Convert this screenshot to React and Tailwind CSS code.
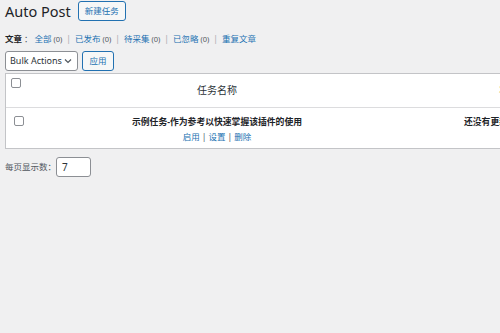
import React from "react";

const font = { fontFamily: '"Noto Sans", "Noto Sans CJK SC", sans-serif' };

function Box({ className = "" }) {
  return (
    <div
      className={`w-[10px] h-[10px] rounded-[2px] border border-[#8c8f94] bg-white ${className}`}
    />
  );
}

function Sep() {
  return <span className="text-[#a7aaad] mx-[4px]">|</span>;
}

function Link({ label }) {
  return (
    <span>
      <span className="text-[#2271b1]">{label}</span>
      <span className="text-[#50575e] text-[7.5px] ml-[2px]">(0)</span>
    </span>
  );
}

export default function App() {
  return (
    <div
      className="w-[500px] h-[333px] bg-[#f0f0f1] overflow-hidden pl-[5px] text-[#1d2327]"
      style={font}
    >
      <div className="mt-[1px] h-[20px] flex items-center gap-[7px]">
        <h1 className="text-[14.5px] leading-[20px] font-normal text-[#1d2327]">
          Auto Post
        </h1>
        <div className="h-[20px] px-[6px] flex items-center border border-[#2271b1] rounded-[3px] bg-[#f6f7f7] text-[#2271b1] text-[8.5px]">
          新建任务
        </div>
      </div>

      <div className="mt-[11px] h-[14px] leading-[14px] text-[8.5px] flex items-center whitespace-nowrap">
        <span className="font-bold text-[#1d2327]">文章</span>
        <span className="text-[#50575e] mx-[2px]">：</span>
        <Link label="全部" />
        <Sep />
        <Link label="已发布" />
        <Sep />
        <Link label="待采集" />
        <Sep />
        <Link label="已忽略" />
        <Sep />
        <span className="text-[#2271b1]">重复文章</span>
      </div>

      <div className="mt-[5px] h-[20px] flex gap-[4px]">
        <div className="w-[73px] h-[20px] border border-[#8c8f94] rounded-[3px] bg-white flex items-center justify-between pl-[4px] pr-[5px] text-[9px] text-[#2c3338] whitespace-nowrap">
          <span>Bulk Actions</span>
          <svg width="8" height="6" viewBox="0 0 8 6" fill="none">
            <path d="M1 1.5 L4 4.5 L7 1.5" stroke="#50575e" strokeWidth="1.2" />
          </svg>
        </div>
        <div className="w-[32px] h-[20px] border border-[#2271b1] rounded-[3px] bg-[#f6f7f7] text-[#2271b1] text-[8.5px] flex items-center justify-center">
          应用
        </div>
      </div>

      <div className="mt-[2px] w-[520px] bg-white border border-[#c3c4c7] whitespace-nowrap overflow-hidden">
        <div className="h-[34px] flex border-b border-[#dcdcde]">
          <div className="w-[25px] shrink-0 pl-[5px] pt-[4px]">
            <Box />
          </div>
          <div className="w-[372px] shrink-0 flex items-center justify-center text-[10px] text-[#2c3338]">
            任务名称
          </div>
          <div className="flex-1 flex items-center pl-[96px] text-[10px] text-[#c9a33b]">
            状态
          </div>
        </div>
        <div className="h-[40px] flex">
          <div className="w-[25px] shrink-0 pl-[8px] pt-[8px]">
            <Box />
          </div>
          <div className="w-[372px] shrink-0 flex flex-col items-center pt-[8px]">
            <div className="text-[8.8px] leading-[12px] font-bold text-[#1d2327]">
              示例任务-作为参考以快速掌握该插件的使用
            </div>
            <div className="mt-[3px] text-[8.5px] leading-[12px]">
              <span className="text-[#2271b1]">启用</span>
              <span className="text-[#50575e] mx-[2px]">|</span>
              <span className="text-[#2271b1]">设置</span>
              <span className="text-[#50575e] mx-[2px]">|</span>
              <span className="text-[#2271b1]">删除</span>
            </div>
          </div>
          <div className="flex-1 pl-[61px] pt-[8px] text-[8.8px] leading-[12px] font-bold text-[#1d2327]">
            还没有更新
          </div>
        </div>
      </div>

      <div className="mt-[8px] h-[20px] flex items-center">
        <span className="text-[8.5px] text-[#50575e]">每页显示数：</span>
        <div className="w-[35px] h-[20px] border border-[#8c8f94] rounded-[3px] bg-white flex items-center pl-[5px] text-[10px] text-[#2c3338]">
          7
        </div>
      </div>
    </div>
  );
}
